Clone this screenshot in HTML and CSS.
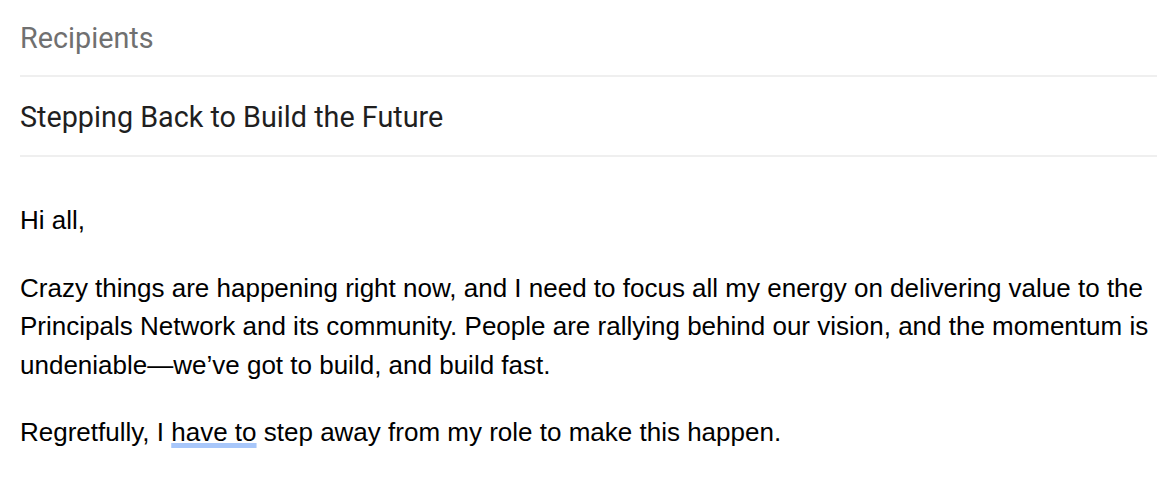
FILE: index.html
```html
<!DOCTYPE html>
<html>
<head>
<meta charset="utf-8">
<link rel="stylesheet" href="styles.css">
</head>
<body>
<div class="compose">
  <div class="field recipients">Recipients</div>
  <div class="field subject">Stepping Back to Build the Future</div>
  <div class="body">
    <p>Hi all,</p>
    <p>Crazy things are happening right now, and I need to focus all my energy on delivering value to the Principals Network and its community. People are rallying behind our vision, and the momentum is undeniable—we’ve got to build, and build fast.</p>
    <p>Regretfully, I <span class="suggest">have to</span> step away from my role to make this happen.</p>
  </div>
</div>
</body>
</html>
```

FILE: styles.css
```css
html, body {
  margin: 0;
  padding: 0;
  background: #ffffff;
}
.compose {
  width: 1137px;
  padding-left: 20px;
}
.field {
  font-family: Roboto, "Noto Sans", sans-serif;
  font-size: 28.75px;
  line-height: 32px;
  border-bottom: 2px solid #efefef;
}
.recipients {
  padding: 22px 0 21px 0;
  color: #707070;
}
.subject {
  padding: 24px 0 22px 0;
  color: #1f1f1f;
}
.body {
  font-family: "Liberation Sans", Arial, sans-serif;
  font-size: 26px;
  line-height: 38.5px;
  color: #000;
  padding-top: 44px;
}
.body p {
  margin: 0 0 29px 0;
}
.suggest {
  text-decoration: underline;
  text-decoration-color: #a8c7fa;
  text-decoration-thickness: 5px;
  text-underline-offset: 2px;
  text-decoration-skip-ink: none;
}
```
